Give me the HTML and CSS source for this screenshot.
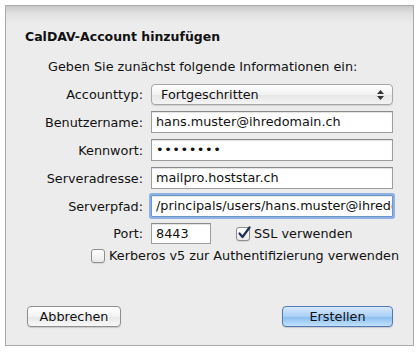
FILE: index.html
```html
<!DOCTYPE html>
<html lang="de">
<head>
  <meta charset="UTF-8" />
  <link rel="stylesheet" href="styles.css">
</head>
<body>
  <div class="sheet">
    <h1 class="title">CalDAV-Account hinzufügen</h1>
    <p class="intro">Geben Sie zunächst folgende Informationen ein:</p>

    <div class="form">
      <label class="lbl">Accounttyp:</label>
      <div class="popup">
        <span>Fortgeschritten</span>
        <svg class="arrows" width="7" height="10" viewBox="0 0 7 10">
          <path d="M3.5 0 L7 4 L0 4 Z M3.5 10 L7 6 L0 6 Z" fill="#333"/>
        </svg>
      </div>

      <label class="lbl">Benutzername:</label>
      <div class="field">hans.muster@ihredomain.ch</div>

      <label class="lbl">Kennwort:</label>
      <div class="field dots">&#8226;&#8226;&#8226;&#8226;&#8226;&#8226;&#8226;&#8226;</div>

      <label class="lbl">Serveradresse:</label>
      <div class="field">mailpro.hoststar.ch</div>

      <label class="lbl">Serverpfad:</label>
      <div class="field focus">/principals/users/hans.muster@ihredo</div>

      <label class="lbl">Port:</label>
      <div class="port-row">
        <div class="field port">8443</div>
        <span class="check on">
          <svg width="14" height="14" viewBox="0 0 14 14">
            <path d="M2.5 7.5 L5.5 11 L12.5 1.5" fill="none" stroke="#1d2f55" stroke-width="2.2" stroke-linecap="round" stroke-linejoin="round"/>
          </svg>
        </span>
        <span class="check-text">SSL verwenden</span>
      </div>
    </div>

    <div class="kerberos">
      <span class="check"></span>
      <span class="check-text">Kerberos v5 zur Authentifizierung verwenden</span>
    </div>

    <div class="buttons">
      <button class="btn">Abbrechen</button>
      <button class="btn default">Erstellen</button>
    </div>
  </div>
</body>
</html>
```

FILE: styles.css
```css
* {
  margin: 0;
  padding: 0;
  box-sizing: border-box;
}

html, body {
  height: 100%;
  background: #fff;
  overflow: hidden;
}

body {
  padding: 5px;
  font-family: "DejaVu Sans", "Lucida Grande", sans-serif;
  font-size: 12.8px;
  color: #111;
}

.sheet {
  width: 409px;
  height: 341px;
  border: 1px solid #a9a9a9;
  background: linear-gradient(#c9c9c9 0, #e2e2e2 8px, #ececec 18px, #ececec 100%);
  padding: 22px 0 0 0;
}

.title {
  font-size: 12.5px;
  font-weight: bold;
  margin-left: 19px;
  height: 18px;
  line-height: 18px;
}

.intro {
  margin: 13px 0 0 42px;
  height: 16px;
  line-height: 16px;
}

.form {
  display: grid;
  grid-template-columns: 137px 242px;
  column-gap: 8px;
  row-gap: 6px;
  margin-top: 9px;
  align-items: center;
}

.lbl {
  text-align: right;
}

.popup {
  height: 21px;
  border: 1px solid #a6a6a6;
  border-radius: 4px;
  background: linear-gradient(#ffffff, #f1f1f1 50%, #e6e6e6 51%, #f4f4f4);
  box-shadow: 0 1px 1px rgba(0, 0, 0, 0.12);
  display: flex;
  align-items: center;
  justify-content: space-between;
  padding: 0 8px 0 9px;
}

.field {
  height: 22px;
  line-height: 20px;
  border: 1px solid #9d9d9d;
  border-top-color: #8a8a8a;
  background: #fff;
  box-shadow: inset 0 1px 1px rgba(0, 0, 0, 0.12);
  padding: 0 4px;
  white-space: nowrap;
  overflow: hidden;
}

.dots {
  font-size: 13px;
  letter-spacing: 0.5px;
}

.focus {
  border-color: #6d95c9;
  box-shadow: 0 0 0 2px #8db2e3, inset 0 1px 1px rgba(0, 0, 0, 0.1);
  border-radius: 1px;
}

.port-row {
  display: flex;
  align-items: center;
}

.port {
  width: 60px;
  height: 21px;
}

.check {
  width: 14px;
  height: 14px;
  border: 1px solid #8e8e8e;
  border-radius: 3px;
  background: linear-gradient(#ffffff, #e9e9e9);
  box-shadow: 0 1px 1px rgba(0, 0, 0, 0.1);
  position: relative;
  flex: none;
}

.port-row .check {
  margin-left: 25px;
}

.check.on svg {
  position: absolute;
  left: 0;
  top: -2px;
}

.check-text {
  margin-left: 4px;
}

.kerberos {
  display: flex;
  align-items: center;
  margin: 4px 0 0 85px;
}

.buttons {
  display: flex;
  justify-content: space-between;
  margin: 43px 20px 0 21px;
}

.btn {
  font-family: inherit;
  font-size: 12.8px;
  color: #111;
  height: 21px;
  border: 1px solid #8f8f8f;
  border-radius: 4px;
  background: linear-gradient(#ffffff, #f3f3f3 50%, #e8e8e8 51%, #f7f7f7);
  box-shadow: 0 1px 1px rgba(0, 0, 0, 0.15);
  width: 94px;
}

.btn.default {
  width: 111px;
  border-color: #5078b8;
  background: linear-gradient(#d6e8fb, #a9cff5 50%, #86bcf1 51%, #c3e1fb);
}
```
